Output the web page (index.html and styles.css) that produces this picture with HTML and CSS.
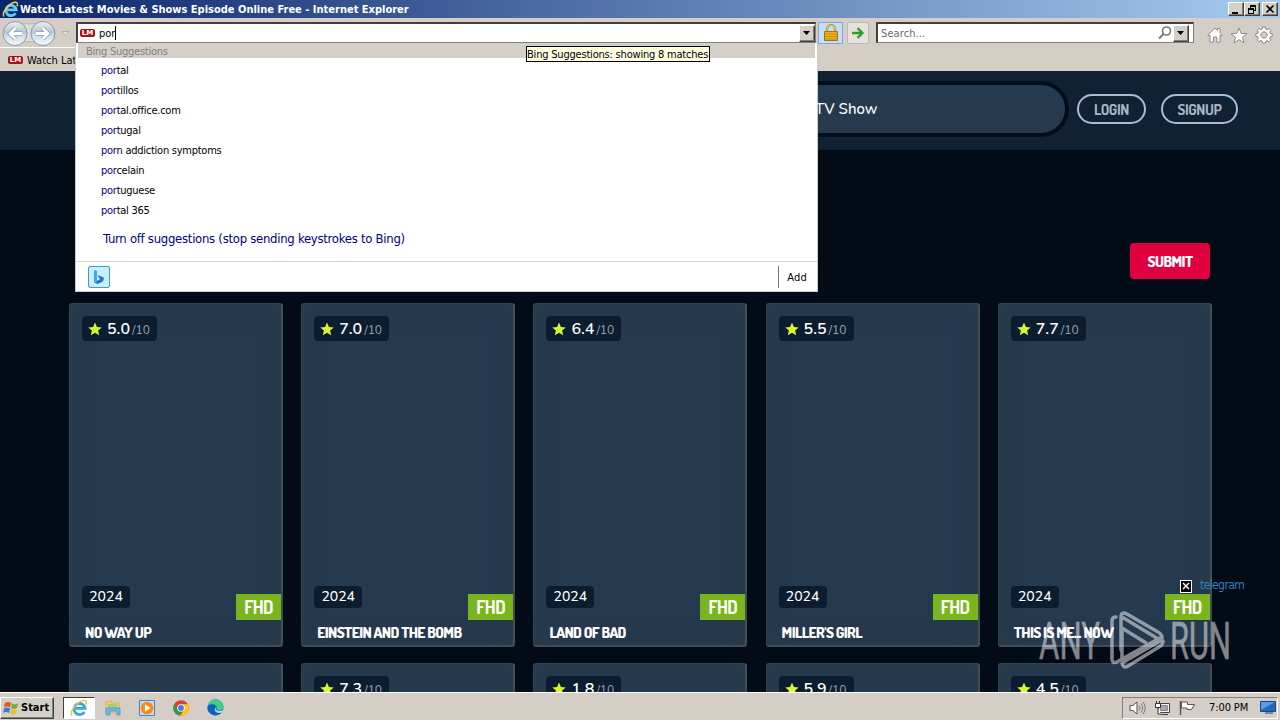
FILE: index.html
```html
<!DOCTYPE html>
<html lang="en">
<head>
  <meta charset="UTF-8" />
  <title>Watch Latest Movies &amp; Shows Episode Online Free</title>
  <link rel="stylesheet" href="styles.css">
</head>
<body>
  <div class="titlebar">
    <svg class="ie" width="17" height="17" viewBox="0 0 17 17"><path d="M13.5 12.2A5.2 5.2 0 1 1 14.2 8.8H5" fill="none" stroke="#62c9f7" stroke-width="2.7"/><path d="M2 15.5C-1 12 8 1 14 1.3c2 .3 1.500 3 1 4" fill="none" stroke="#f5d44b" stroke-width="1.4"/></svg>
    <h1>Watch Latest Movies &amp; Shows Episode Online Free - Internet Explorer</h1>
    <div class="win-buttons">
      <button><svg width="14" height="11"><path d="M3 8h6v2H3z"/></svg></button>
      <button><svg width="14" height="11"><path d="M5 1h6v6H9V6h1V3H6v1H5zM3 4h6v6H3zm1 2v3h4V6z" fill-rule="evenodd"/></svg></button>
      <button class="close"><svg width="14" height="11"><path d="M3.500 1.500l7 7m0-7l-7 7" stroke="#000" stroke-width="1.700"/></svg></button>
    </div>
  </div>

  <div class="toolbar">
    <div class="nav-row">
      <svg class="back-forward" width="72" height="27" viewBox="0 0 72 27">
        <defs><linearGradient id="orb" x2="0" y2="1"><stop stop-color="#eef1f5"/><stop offset=".45" stop-color="#b7c4d4"/><stop offset=".55" stop-color="#cbd9e6"/><stop offset="1" stop-color="#f4fdff"/></linearGradient></defs>
        <path d="M15 2q14 4 28 0v22q-14-5-28 0z" fill="#dcdcdc" stroke="#b5b5b5"/>
        <circle cx="15" cy="13.500" r="12" fill="url(#orb)" stroke="#8a98a6"/>
        <circle cx="43" cy="13.500" r="12" fill="url(#orb)" stroke="#8a98a6"/>
        <path d="M22 13.500H10m5.500-5.500L10 13.500l5.500 5.500M36 13.500h12M42.500 8l5.500 5.500-5.500 5.500" fill="none" stroke="#8f9eae" stroke-width="4.500"/>
        <path d="M22 13.500H10m5.500-5.500L10 13.500l5.500 5.500M36 13.500h12M42.500 8l5.500 5.500-5.500 5.500" fill="none" stroke="#fff" stroke-width="2.800"/>
        <path d="M62 11.500h7l-3.500 4z" fill="#e8e5df" stroke="#b3aea6"/>
      </svg>
      <div class="address">
        <span class="favicon">LM</span>
        <span class="typed">por</span>
        <button class="drop"><svg width="8" height="4"><path d="M0 0h7L3.500 4z"/></svg></button>
      </div>
      <div class="lock"><svg width="14" height="18" viewBox="0 0 14 18"><path d="M3 8V5a4 4 0 0 1 8 0v3" fill="none" stroke="#a98a2c" stroke-width="2.200"/><path d="M3 8V5a4 4 0 0 1 8 0v3" fill="none" stroke="#f0dc8a" stroke-width=".8"/><path d="M.5 7.500h13v9H.5z" fill="#eeb21a" stroke="#a87412"/><path d="M1 10h12M1 12.500h12M1 15h12" stroke="#c88c12"/></svg></div>
      <div class="go"><svg width="14" height="12" viewBox="0 0 14 12"><path d="M1 6h10M6.500 1.200L11.500 6l-5 4.800" fill="none" stroke="#2f9a2f" stroke-width="2.300"/></svg></div>
      <div class="search">
        <span>Search...</span>
        <svg width="14" height="14" viewBox="0 0 14 14"><circle cx="8.500" cy="5" r="4" fill="none" stroke="#777" stroke-width="1.600"/><path d="M5.500 8L1 12.500" stroke="#777" stroke-width="2"/></svg>
        <button class="drop"><svg width="8" height="4"><path d="M0 0h7L3.500 4z"/></svg></button>
      </div>
      <div class="tools">
        <svg width="16" height="16" viewBox="0 0 16 16"><path d="M.8 8L8 1l2.500 2.300V1.500h2.500v4.300L15.200 8l-1 1L13 8v7.200H9.800V10H6.300v5.200H3V8L1.800 9z"/></svg>
        <svg width="18" height="17" viewBox="0 0 18 17"><path d="M9 1l2.100 5.400 5.900.3-4.600 3.600 1.600 5.600L9 12.700l-5 3.200 1.600-5.600L1 6.700l5.900-.3z"/></svg>
        <svg width="18" height="18" viewBox="0 0 18 18"><path d="M7.500 1h3l.4 2.200 1.200.5L14 2.400 15.900 4.300l-1.300 1.900.5 1.200 2.100.4v2.700l-2.100.4-.5 1.200 1.300 1.900-1.900 1.900-1.900-1.300-1.200.5L10.500 17h-3l-.4-2.100-1.200-.5L4 15.700 2.100 13.800l1.300-1.900-.5-1.200L.8 10.300V7.600l2.100-.4.500-1.200L2.100 4.200 4 2.300l1.900 1.300 1.200-.5zM9 5.800a3.200 3.200 0 1 0 .01 0z" fill-rule="evenodd"/></svg>
      </div>
    </div>
    <div class="tab"><span class="favicon">LM</span>Watch Latest</div>
  </div>

  <div class="suggestions">
    <div class="heading">Bing Suggestions</div>
    <ul>
      <li><b>por</b>tal</li>
      <li><b>por</b>tillos</li>
      <li><b>por</b>tal.office.com</li>
      <li><b>por</b>tugal</li>
      <li><b>por</b>n addiction symptoms</li>
      <li><b>por</b>celain</li>
      <li><b>por</b>tuguese</li>
      <li><b>por</b>tal 365</li>
    </ul>
    <a class="turn-off">Turn off suggestions (stop sending keystrokes to Bing)</a>
    <div class="footer">
      <div class="bing"><svg width="12" height="16" viewBox="0 0 12 16"><path d="M1 1l3 1v9.500l-3 2z" fill="#35a9ee"/><path d="M4.500 6l6 2.300q1 3-1.500 4.700l-4.500 2-3-1.500 3-2 2.500-1z" fill="#1b7bd6"/></svg></div>
      <div class="add">Add</div>
    </div>
  </div>
  <div class="tooltip">Bing Suggestions: showing 8 matches</div>

  <div class="page">
    <div class="site-header">
      <div class="site-search">TV Show</div>
      <a class="pill login">LOGIN</a>
      <a class="pill signup">SIGNUP</a>
    </div>
    <div class="filters"><button class="submit">SUBMIT</button></div>
    <div class="movies" id="movies"></div>
  </div>

  <div class="ad"><span class="ad-close"><svg width="8" height="8"><path d="M1 1l6 6m0-6L1 7" stroke="#fff" stroke-width="1.500"/></svg></span><span>telegram</span></div>

  <svg class="watermark" width="194" height="64" viewBox="0 0 194 64">
    <text x="1" y="51" textLength="61" lengthAdjust="spacingAndGlyphs">ANY</text>
    <text x="132" y="51" textLength="61" lengthAdjust="spacingAndGlyphs">RUN</text>
    <g fill="none" stroke="#fff" stroke-width="3.500" stroke-linejoin="round" stroke-linecap="round">
      <path d="M78 9q-4 0-4 4v38q0 5 5 3l5-3V20l24 15"/>
      <path d="M83 42V9q0-6 6-3l31 18q4 2 4 6M84 9l38 23"/>
      <path d="M84 51l38-21M84 55q1 6 6 3l31-19q4-2 4-6M84 55l38-22"/>
    </g>
  </svg>

  <div class="taskbar">
    <button class="start">
      <svg width="17" height="16" viewBox="0 0 17 16"><path d="M2 3q3-2 6 0L7 7.500q-3-2-6 0z" fill="#e4572e"/><path d="M9 3.300q3 2 6 0L14 8q-3 2-6 0z" fill="#6ab23e"/><path d="M1 8.500q3-2 6 0L6 13q-3-2-6 0z" fill="#3a7ad8"/><path d="M8 9q3 2 6 0l-1 4.500q-3 2-6 0z" fill="#f2bd2c"/></svg>Start
    </button>
    <div class="task active"><svg width="18" height="18" viewBox="0 0 17 17"><path d="M13.500 12.200A5.200 5.200 0 1 1 14.200 8.800H5" fill="none" stroke="#35a8e4" stroke-width="2.700"/><path d="M2 15.500C-1 12 8 1 14 1.300c2 .3 1.500 3 1 4" fill="none" stroke="#f0c23a" stroke-width="1.400"/></svg></div>
    <div class="task"><svg width="16" height="16" viewBox="0 0 16 16"><path d="M1 2l5-1 1 2h7v10H1z" fill="#eed06c" stroke="#c9a94a" stroke-width=".7"/><path d="M3 4h9v4H3z" fill="#a8cf73"/><path d="M1 8h14v7h-3v-4H5v4H1z" fill="#69bde5" stroke="#4291bd" stroke-width=".7"/></svg></div>
    <div class="task"><svg width="16" height="16" viewBox="0 0 16 16"><path d="M.5.500h15v15H.5z" fill="#c7dcf1" stroke="#3d86ca"/><circle cx="8" cy="8" r="6.300" fill="#f68a12"/><path d="M6 4.300L11.500 8 6 11.700z" fill="#fff"/></svg></div>
    <div class="task"><svg width="16" height="16" viewBox="0 0 16 16"><circle cx="8" cy="8" r="7.700" fill="#e23c30"/><path d="M1.300 4.200L5 10l3 2-2.300 3.400A7.700 7.700 0 0 1 1.300 4.200z" fill="#24a04c"/><path d="M8 4.300h6.800A7.700 7.700 0 0 1 7 15.700l4.300-5.800z" fill="#fbc918"/><circle cx="8" cy="8" r="3.800" fill="#fff"/><circle cx="8" cy="8" r="2.900" fill="#397ee8"/></svg></div>
    <div class="task"><svg width="17" height="17" viewBox="0 0 16 16"><circle cx="8" cy="8" r="7.700" fill="#1595d2"/><path d="M1 5.500A7.500 7.500 0 0 1 15.500 7c0 4-5 4-6 2.500C10.500 6 6 3.500 1 5.500z" fill="#43cf83"/><path d="M.4 8C2 4 8 4 8.500 7.500 6 8 7 13 14 12.300A7.700 7.700 0 0 1 .4 8z" fill="#0d62b8"/><path d="M8.500 7.500c-1.500 2 0 5 6.800 3.200l1 1.600L13.500 13C8 14 5.500 10 8.500 7.500z" fill="#d4cec6"/></svg></div>
    <div class="tray">
      <svg width="17" height="16" viewBox="0 0 17 16"><path d="M1 5.500h3L8 2v12l-4-3.500H1z" fill="#fff" stroke="#555"/><path d="M10 5.500q2 2.500 0 5M12 3.500q3.500 4.500 0 9M14 2q4.500 6 0 12" fill="none" stroke="#777"/></svg>
      <svg width="17" height="16" viewBox="0 0 17 16"><path d="M4.500 3.500h11v9h-11zM7 14.500h7" fill="#f2f2f2" stroke="#444"/><path d="M6.500 5.500h7v5h-7z" fill="#a8a8a8" stroke="#888"/><path d="M1.500 3.500h5v4h-5zM2.500 1v2M5.500 1v2M4 8v6h3" fill="#fff" stroke="#333"/></svg>
      <svg width="16" height="16" viewBox="0 0 16 16"><path d="M1.500 1v14" stroke="#555" stroke-width="1.500"/><path d="M2.500 2h6v2.500h7l-3 5H8V8H2.500z" fill="#fff" stroke="#555"/></svg>
      <span class="clock">7:00 PM</span>
      <svg width="17" height="13" viewBox="0 0 17 13"><path d="M.5.500h15v10H.5z" fill="#2467bf" stroke="#174b8d"/><path d="M1 1h14L1 9z" fill="#599be7"/><path d="M5 12h8" stroke="#5e7187" stroke-width="1.500"/></svg>
    </div>
  </div>

  <script>
    const movies = [
      { title: "NO WAY UP", rating: "5.0", year: 2024 },
      { title: "EINSTEIN AND THE BOMB", rating: "7.0", year: 2024 },
      { title: "LAND OF BAD", rating: "6.4", year: 2024 },
      { title: "MILLER'S GIRL", rating: "5.5", year: 2024 },
      { title: "THIS IS ME... NOW", rating: "7.7", year: 2024 },
      {},
      { rating: "7.3" },
      { rating: "1.8" },
      { rating: "5.9" },
      { rating: "4.5" }
    ];
    const star = '<svg width="14" height="14" viewBox="0 0 14 14"><path d="M7 .5l1.900 4.500 4.800.4-3.600 3.200 1.100 4.700L7 10.800l-4.200 2.500 1.100-4.700L.3 5.400l4.800-.4z" fill="#d9f832"/></svg>';

    document.getElementById("movies").innerHTML = movies.map(m => `
      <div class="card">
        ${m.rating ? `<div class="rating">${star}<strong>${m.rating}</strong><small>/10</small></div>` : ""}
        ${m.title ? `
          <div class="meta"><span class="year">${m.year}</span><span class="quality">FHD</span></div>
          <h3>${m.title}</h3>` : ""}
      </div>
    `).join("");
  </script>
</body>
</html>
```
FILE: styles.css
```css
* { box-sizing: border-box; }

body {
  margin: 0;
  width: 1280px;
  height: 720px;
  overflow: hidden;
  position: relative;
  display: flex;
  flex-direction: column;
  font-family: Tahoma, "DejaVu Sans Condensed", "DejaVu Sans", sans-serif;
  font-size: 11px;
  letter-spacing: -0.25px;
  color: #000;
  background: #020b16;
}

svg { display: block; flex: none; }
button { font: inherit; letter-spacing: inherit; padding: 0; }

.titlebar {
  height: 18px;
  flex: none;
  display: flex;
  align-items: center;
  padding: 0 2px;
  background: linear-gradient(to right, #0a246a, #a6caf0);
  color: #fff;
}

.titlebar h1 {
  margin: 0 auto 0 1px;
  font-size: 11px;
  letter-spacing: 0;
  white-space: nowrap;
}

.win-buttons { display: flex; }

.win-buttons button, .drop {
  background: #d4d0c8;
  border: 1px solid;
  border-color: #fff #404040 #404040 #fff;
  box-shadow: inset -1px -1px #808080;
}

.win-buttons button { width: 16px; height: 14px; }
.win-buttons .close { margin-left: 2px; }

.toolbar {
  height: 53px;
  flex: none;
  background: #d4cec6;
  border-bottom: 1px solid #d4d0c8;
}

.nav-row {
  display: flex;
  height: 29px;
  padding: 2px 0 0;
}

.back-forward { margin: 0 4px 0 0; }

.address, .search {
  display: flex;
  align-items: center;
  background: #fff;
  border: 1px solid #808080;
  border-top: 2px solid #404040;
  border-left: 2px solid #404040;
}

.address {
  width: 740px;
  height: 21px;
  margin-top: 2px;
  padding-left: 2px;
}

.favicon {
  width: 15px;
  height: 8px;
  border-radius: 2px;
  background: #a31515;
  color: #fff;
  font: bold 7px/8px "DejaVu Sans", sans-serif;
  letter-spacing: 0;
  text-align: center;
}

.typed {
  margin: 0 auto 0 4px;
  padding-top: 1px;
  letter-spacing: 0;
  border-right: 1px solid #000;
}

.drop {
  width: 16px;
  height: 17px;
  display: flex;
  align-items: center;
  justify-content: center;
}

.lock, .go {
  display: flex;
  align-items: center;
  justify-content: center;
  height: 22px;
  margin-top: 2px;
}

.lock {
  width: 25px;
  margin-left: 2px;
  background: #c9def5;
  border: 1px solid #7ba7e0;
}

.go {
  width: 22px;
  margin-left: 4px;
  background: #e5e2de;
  border: 1px solid #bab6b0;
  border-radius: 2px;
}

.search {
  width: 318px;
  height: 21px;
  margin: 2px 0 0 7px;
  padding: 0 4px 0 3px;
  color: #6b6b6b;
}

.search span { margin-right: auto; padding-top: 1px; letter-spacing: 0.1px; }
.search .drop { margin-left: 1px; }

.tools {
  display: flex;
  align-items: center;
  gap: 7px;
  margin: 3px 0 0 13px;
}

.tools path { fill: #fff; stroke: #8c8883; stroke-width: 1px; }

.tab {
  display: flex;
  align-items: center;
  gap: 4px;
  width: 240px;
  height: 23px;
  padding: 2px 0 0 8px;
  letter-spacing: 0;
  border-top: 1px solid #fff;
  white-space: nowrap;
}

.suggestions {
  position: absolute;
  z-index: 5;
  left: 75px;
  top: 43px;
  width: 743px;
  height: 249px;
  background: #fff;
  border: 1px solid #c9c9c9;
  border-top: 0;
}

.suggestions .heading {
  height: 15px;
  margin: 0 2px;
  padding-left: 8px;
  line-height: 17px;
  background: #d4d0c8;
  color: #808080;
  letter-spacing: -0.25px;
}

.suggestions ul {
  list-style: none;
  margin: 3px 0 0;
  padding: 0 0 0 25px;
  line-height: 20px;
}

.suggestions b { font-weight: normal; color: #000080; }

.turn-off {
  display: block;
  height: 40px;
  padding-left: 27px;
  line-height: 36px;
  font-size: 13px;
  letter-spacing: -0.28px;
  color: #000080;
}

.footer {
  display: flex;
  align-items: center;
  justify-content: space-between;
  height: 30px;
  padding: 0 10px 0 12px;
  border-top: 1px solid #d4d4d4;
}

.bing {
  width: 22px;
  height: 22px;
  display: flex;
  align-items: center;
  justify-content: center;
  border: 1px solid #3c9ccc;
  border-radius: 2px;
  background: #c9edfb;
}

.add {
  padding-left: 8px;
  line-height: 23px;
  height: 22px;
  letter-spacing: 0.2px;
  border-left: 1px solid #777;
}

.tooltip {
  position: absolute;
  z-index: 6;
  left: 526px;
  top: 46px;
  width: 184px;
  height: 16px;
  line-height: 15px;
  letter-spacing: -0.2px;
  border: 1px solid #000;
  background: #ffffe1;
  white-space: nowrap;
}

.page {
  flex: 1;
  min-height: 0;
  overflow: hidden;
  background: #020b16;
  font-family: Nunito, "Noto Sans", sans-serif;
  letter-spacing: 0;
  color: #fff;
}

.site-header {
  display: flex;
  align-items: center;
  justify-content: flex-end;
  height: 79px;
  padding: 0 42px 3px 0;
  background: #102133;
}

.site-search {
  width: 700px;
  height: 56px;
  margin-right: 8px;
  padding-left: 442px;
  line-height: 48px;
  border: 4px solid #010d1b;
  border-radius: 28px;
  background: #25394f;
  font-size: 15px;
  font-weight: 500;
}

.pill, .submit, .quality, .card h3 {
  font-family: Dosis, "Liberation Sans Narrow", "Roboto", sans-serif;
  font-weight: bold;
}

.pill {
  height: 30px;
  line-height: 28px;
  border: 2px solid #a9bdd6;
  border-radius: 15px;
  color: #a9b6c7;
  font-size: 15px;
  letter-spacing: -0.4px;
  text-align: center;
}

.login { width: 69px; margin-right: 15px; }
.signup { width: 77px; }

.filters {
  display: flex;
  justify-content: flex-end;
  padding: 93px 70px 24px 0;
}

.submit {
  width: 80px;
  height: 36px;
  border: 0;
  border-radius: 4px;
  background: #e1003f;
  color: #fff;
  font-size: 15px;
  font-weight: 800;
  letter-spacing: -0.6px;
}

.movies {
  display: grid;
  grid-template-columns: repeat(5, 214px);
  grid-auto-rows: 344px;
  gap: 16px 18.2px;
  padding-left: 69px;
}

.card {
  display: flex;
  flex-direction: column;
  padding: 12px 0 0 12px;
  border: 1px solid #34434c;
  border-right: 2px solid #414c55;
  border-bottom: 2px solid #414c55;
  border-radius: 3px;
  background: #25394f;
  box-shadow: inset 0 0 22px #2a3c48;
}

.rating {
  display: flex;
  align-items: center;
  width: 75px;
  height: 25px;
  padding-left: 6px;
  border-radius: 4px;
  background: #0d1d30;
}

.rating strong {
  margin: 0 2px 0 5px;
  font-size: 16px;
  font-weight: 600;
}

.rating small {
  font-size: 12px;
  font-weight: 500;
  color: #8d9aaa;
  padding-top: 2px;
}

.meta {
  display: flex;
  justify-content: space-between;
  margin-top: auto;
}

.year {
  width: 48px;
  height: 22px;
  line-height: 21px;
  border-radius: 4px;
  background: #0d1d30;
  font-size: 14px;
  font-weight: 500;
  text-align: center;
}

.quality {
  width: 45px;
  height: 26px;
  margin: 8px 0 0;
  line-height: 27px;
  background: #7ab51d;
  font-size: 18px;
  letter-spacing: -0.6px;
  text-align: center;
}

.card h3 {
  margin: 0 0 0 3px;
  height: 25px;
  line-height: 26px;
  font-size: 15px;
  font-weight: 800;
  letter-spacing: -0.6px;
  white-space: nowrap;
}

.ad {
  position: absolute;
  left: 1180px;
  top: 578px;
  display: flex;
  gap: 8px;
  color: #337fb9;
  font: 12px/14px "DejaVu Sans Condensed", "DejaVu Sans", sans-serif;
  letter-spacing: -0.6px;
}

.ad-close {
  width: 12px;
  height: 13px;
  margin-top: 2px;
  padding: 1px;
  border: 1px solid #fff;
  background: #000;
}

.watermark {
  position: absolute;
  left: 1038px;
  top: 608px;
  opacity: 0.5;
}

.watermark text {
  font-family: "Liberation Sans Narrow", "Roboto", sans-serif;
  font-size: 51px;
  fill: #fff;
  stroke: #fff;
  stroke-width: 0.4px;
  letter-spacing: 0;
}

.taskbar {
  position: relative;
  height: 28px;
  flex: none;
  display: flex;
  align-items: center;
  padding: 2px 2px 0 0;
  border-top: 1px solid #fff;
  background: #d4cec6;
}

.start {
  display: flex;
  align-items: center;
  gap: 1px;
  width: 54px;
  height: 22px;
  margin-right: 9px;
  padding-left: 2px;
  font-weight: bold;
  letter-spacing: 0;
  background: #d4d0c8;
  border: 1px solid;
  border-color: #fff #404040 #404040 #fff;
  box-shadow: inset -1px -1px #808080;
}

.task {
  width: 34px;
  height: 22px;
  display: flex;
  align-items: center;
  justify-content: center;
}

.task.active {
  width: 32px;
  margin-right: 1px;
  background: #fff;
  border: 1px solid #404040;
  border-color: #404040 #fff #fff #404040;
}

.tray {
  display: flex;
  align-items: center;
  gap: 8px;
  width: 156px;
  height: 22px;
  margin-left: auto;
  padding-left: 6px;
  border: 1px solid;
  border-color: #808080 #fff #fff #808080;
}

.clock { margin: 0 4px 0 6px; white-space: nowrap; letter-spacing: -0.1px; }
```
